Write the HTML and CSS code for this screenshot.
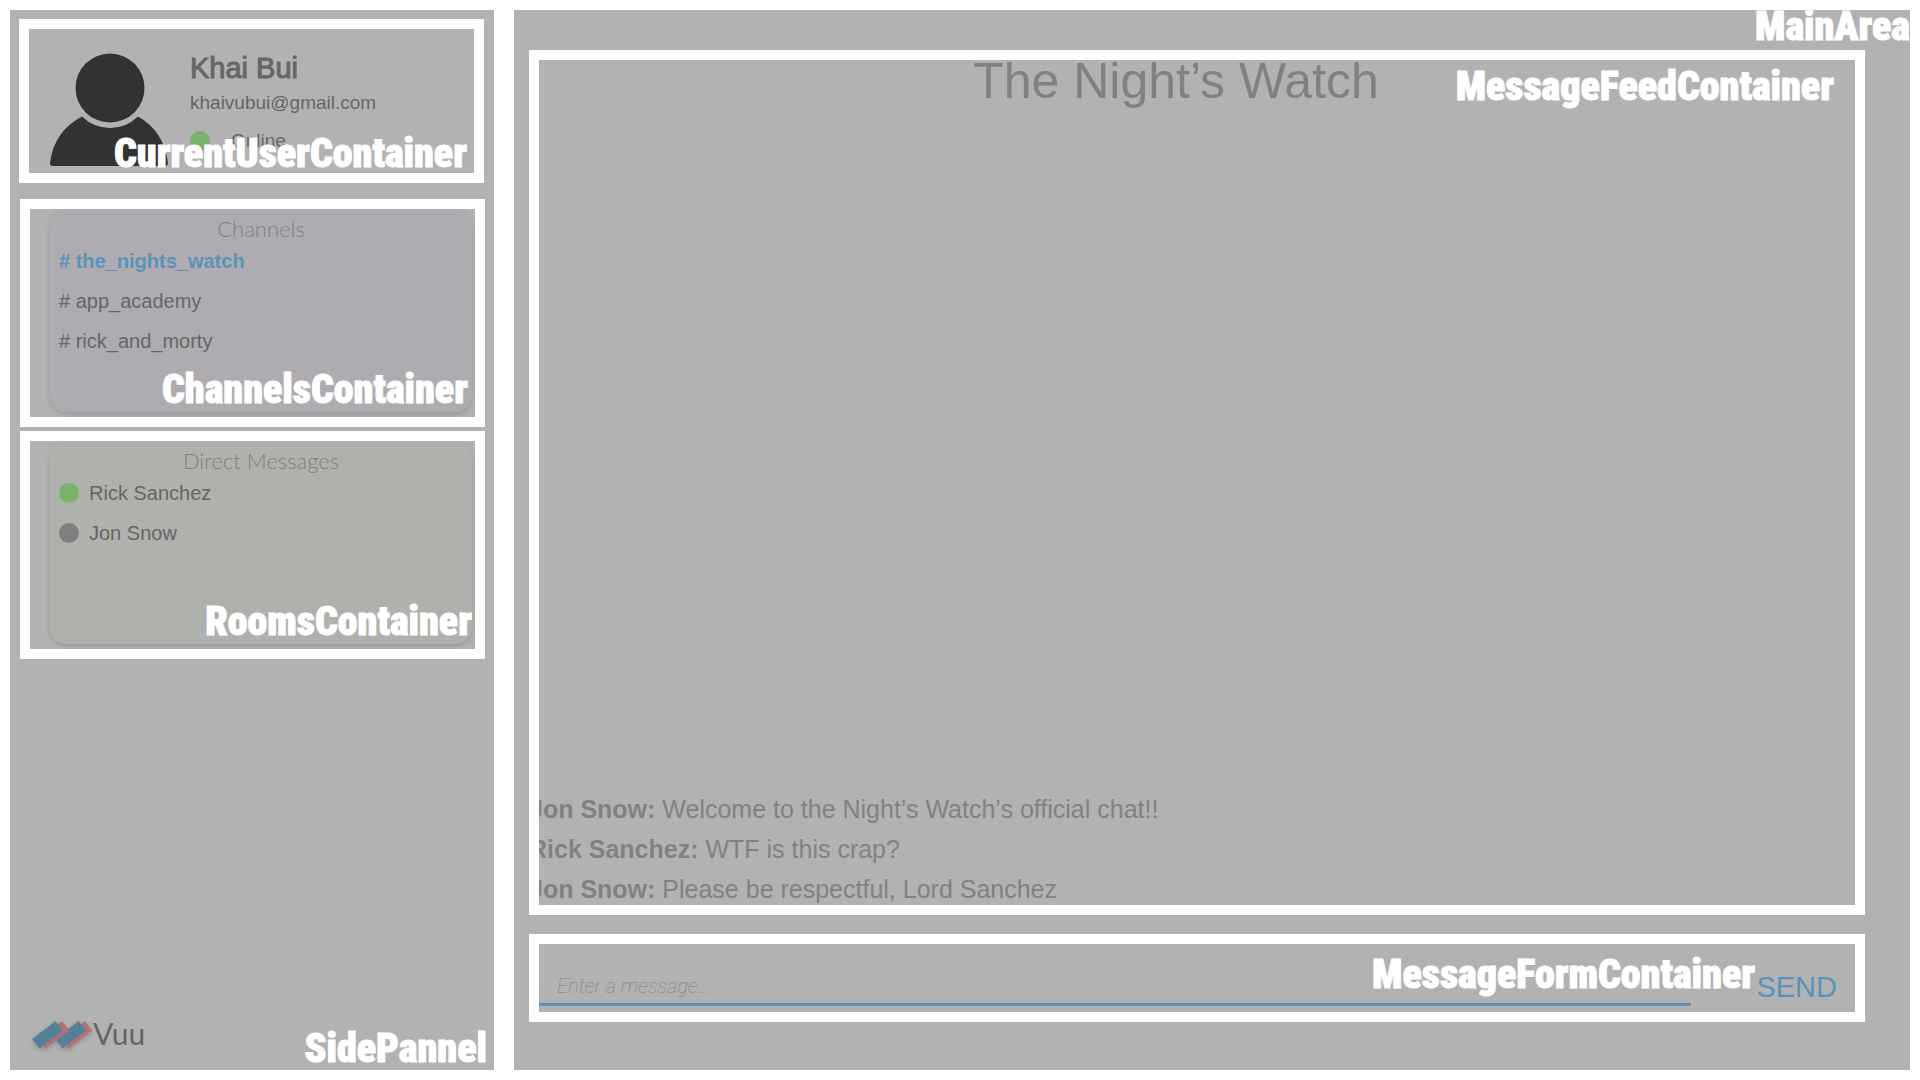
FILE: index.html
```html
<!DOCTYPE html>
<html lang="en">
<head>
<meta charset="utf-8">
<title>Vuu</title>
<link rel="stylesheet" href="styles.css">
</head>
<body>
<div class="app">
  <aside class="side">
    <section class="frame user">
      <svg class="avatar" viewBox="0 0 120 114" aria-hidden="true">
        <circle cx="60" cy="35" r="34.5"/>
        <path d="M32 63.500Q44 75 60 75T88 63.500Q114 78 118 110Q118 113 115 113H3Q0 113 0 110Q4 78 32 63.500Z"/>
      </svg>
      <div class="user-info">
        <h2 class="user-name">Khai Bui</h2>
        <p class="user-mail">khaivubui@gmail.com</p>
        <p class="user-status"><span class="dot online"></span>Online</p>
      </div>
      <span class="tag">CurrentUserContainer</span>
    </section>
    <section class="frame group">
      <div class="card channels">
        <h3 class="card-title">Channels</h3>
        <ul class="list">
          <li><a class="item active" href="#nights"># the_nights_watch</a></li>
          <li><a class="item" href="#academy"># app_academy</a></li>
          <li><a class="item" href="#morty"># rick_and_morty</a></li>
        </ul>
      </div>
      <span class="tag">ChannelsContainer</span>
    </section>
    <section class="frame group rooms-frame">
      <div class="card rooms">
        <h3 class="card-title">Direct Messages</h3>
        <ul class="list">
          <li><a class="item" href="#rick"><span class="dot online"></span>Rick Sanchez</a></li>
          <li><a class="item" href="#jon"><span class="dot"></span>Jon Snow</a></li>
        </ul>
      </div>
      <span class="tag">RoomsContainer</span>
    </section>
    <footer class="brand">
      <svg class="logo" viewBox="0 0 60 28" aria-hidden="true">
        <path class="red" d="M30 0L37 9.500 13.500 27.500 6 18.500Z"/>
        <path class="blue" d="M23.500 0L31 9.500 7.500 27.500 0 18Z"/>
        <path class="red" d="M53 0L60 9.500 36.500 27.500 29 18.500Z"/>
        <path class="blue" d="M46.500 0L54 9.500 30.500 27.500 24.500 19 37 9.500 35.500 8.500Z"/>
      </svg>
      <span class="brand-name">Vuu</span>
    </footer>
    <span class="tag">SidePannel</span>
  </aside>
  <main class="main">
    <section class="frame feed">
      <h1 class="title">The Night’s Watch</h1>
      <div class="messages">
        <p class="message"><b>Jon Snow:</b> Welcome to the Night’s Watch’s official chat!!</p>
        <p class="message"><b>Rick Sanchez:</b> WTF is this crap?</p>
        <p class="message"><b>Jon Snow:</b> Please be respectful, Lord Sanchez</p>
      </div>
      <span class="tag">MessageFeedContainer</span>
    </section>
    <form class="frame form">
      <input class="field" type="text" aria-label="Message" placeholder="Enter a message…">
      <button class="send" type="button">SEND</button>
      <span class="tag">MessageFormContainer</span>
    </form>
    <span class="tag">MainArea</span>
  </main>
</div>
</body>
</html>
```
FILE: styles.css
```css
* { box-sizing: border-box; }
body, h1, h2, h3, p, ul { margin: 0; padding: 0; }
body {
  background: #fff;
  color: #666;
  font-family: "Liberation Sans", Arial, sans-serif;
  font-size: 20px;
}
.app {
  display: grid;
  grid-template-columns: 484px 1fr;
  gap: 20px;
  min-height: 100vh;
  padding: 10px;
}
.side, .main {
  position: relative;
  display: flex;
  flex-direction: column;
  background: #b2b2b2;
  overflow: hidden;
}
.side { padding: 9px; }
.main { padding: 40px 45px 48px 15px; gap: 19px; }
.frame {
  position: relative;
  border: 10px solid #fff;
  overflow: hidden;
}

/* Component name labels laid over each region */
.tag {
  position: absolute;
  right: 7px;
  bottom: -1px;
  color: #fff;
  font-family: "Roboto Condensed", Roboto, sans-serif;
  font-size: 40px;
  font-weight: 900;
  line-height: 44px;
  -webkit-text-stroke: 1px #fff;
  pointer-events: none;
}
.user > .tag { bottom: -3px; }
.group > .tag { bottom: 5px; }
.rooms-frame > .tag { right: 3px; }
.main > .tag { top: -5px; right: 0; bottom: auto; }
.feed > .tag { top: 5px; right: 21px; bottom: auto; }
.form > .tag { right: 100px; bottom: 15px; }

.user { display: flex; gap: 20px; width: 465px; height: 164px; padding: 24px 20px 0 21px; }
.avatar { width: 120px; height: 114px; fill: #323232; }
.user-name {
  font-size: 29px;
  font-weight: normal;
  line-height: 30px;
  -webkit-text-stroke: 1px #666;
}
.user-mail { font-size: 19px; line-height: 40px; }
.user-status { display: flex; align-items: center; gap: 21px; font-size: 19px; line-height: 36px; }
.dot { flex: none; width: 20px; height: 20px; border-radius: 50%; background: #7f7f7f; }
.dot.online { background: #7ab26a; }

.group { width: 465px; height: 228px; margin: 16px 0 0 1px; padding: 1px 3px 0 20px; }
.rooms-frame { margin-top: 4px; }
.card {
  height: 202px;
  padding: 3px 9px;
  border-radius: 16px;
  box-shadow: 0 2px 5px rgba(0, 0, 0, .15);
}
.channels { background: #aeacb1; }
.rooms { background: #afb1ac; }
.card-title {
  color: #808080;
  font-family: Lato, sans-serif;
  font-size: 22px;
  font-weight: 300;
  line-height: 32px;
  text-align: center;
}
.list { margin-top: -4px; list-style: none; }
.item {
  display: flex;
  align-items: center;
  gap: 10px;
  height: 40px;
  color: #666;
  text-decoration: none;
}
.active { color: #5c92b9; font-weight: bold; }

.brand { display: flex; align-items: center; gap: 1px; margin: auto 0 10px 13px; }
.logo { width: 60px; height: 28px; overflow: visible; filter: drop-shadow(0 2px 2px rgba(0, 0, 0, .2)); }
.red { fill: #b47173; }
.blue { fill: #567f98; }
.brand-name { padding-bottom: 4px; font-family: Lato, sans-serif; font-size: 30px; line-height: 28px; }

.feed { display: flex; flex: 1; flex-direction: column; justify-content: space-between; }
.title { padding-right: 42px; color: #808282; font-size: 50px; font-weight: normal; line-height: 42px; text-align: center; }
.messages { margin: 0 0 -4px -10px; }
.message { color: #808282; font-size: 25px; line-height: 40px; white-space: nowrap; }

.form { display: flex; height: 88px; padding: 18px 18px 6px 0; justify-content: space-between; align-items: stretch; }
.field {
  width: 1152px;
  padding: 6px 18px 0;
  border: 0;
  border-bottom: 3px solid #5c92b9;
  background: none;
  outline: 0;
  font-family: Roboto, sans-serif;
  font-size: 20px;
}
.field::placeholder { color: #808080; font-style: italic; font-weight: 100; opacity: 1; }
.send {
  padding: 6px 0 0;
  border: 0;
  background: none;
  color: #5c92b9;
  font-family: "Liberation Sans", Arial, sans-serif;
  font-size: 29px;
}
```
